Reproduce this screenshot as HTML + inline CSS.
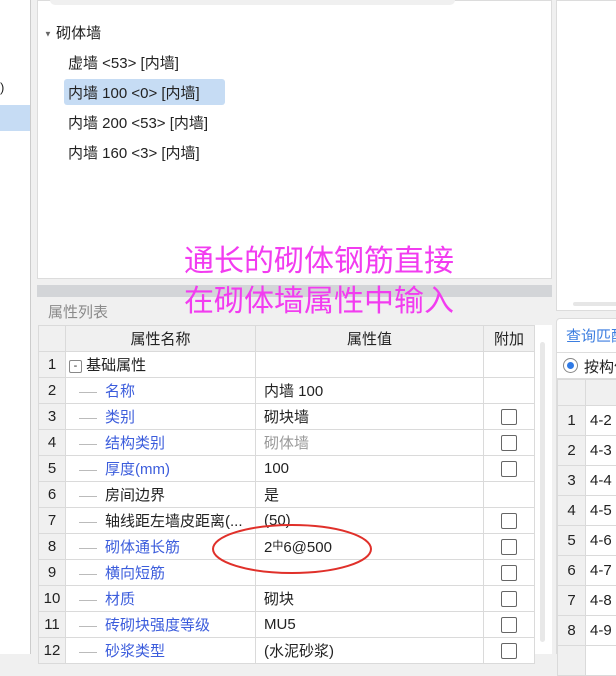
<!DOCTYPE html>
<html><head><meta charset="utf-8"><style>
*{margin:0;padding:0;box-sizing:border-box}
body{width:616px;height:654px;overflow:hidden;background:#f0f0f0;position:relative;font-family:"Liberation Sans","Noto Sans CJK SC",sans-serif;font-size:15px;color:#222}
.a{position:absolute}
table{border-collapse:collapse;table-layout:fixed;position:absolute}
td{border:1px solid #dadada;height:26px;padding:0 0 0 8px;white-space:nowrap;overflow:hidden;font-size:15px;background:#fff}
td.n{background:#f0f0f0;text-align:center;padding:0;font-size:15px}
tr.h td{background:#f0f0f0;text-align:center;padding:0}
.b{color:#3c5ddc}
.g{color:#999}
.cb{display:inline-block;width:16px;height:16px;border:1px solid #666;border-radius:2px;vertical-align:middle;background:#fff}
.ln{display:inline-block;width:18px;border-top:1px solid #bbb;vertical-align:middle;margin:0 8px 0 5px}
td.x{text-align:center;padding:0}
</style></head><body>
<div class="a" style="left:0;top:0;width:31px;height:654px;background:#fff;border-right:1px solid #ccc"></div>
<div class="a" style="left:0;top:105px;width:30px;height:26px;background:#c6dcf4"></div>
<div class="a" style="left:0;top:80px;font-size:13px">)</div>

<div class="a" style="left:37px;top:0;width:515px;height:279px;background:#fff;border:1px solid #dcdcdc"></div>
<div class="a" style="left:50px;top:0;width:405px;height:5px;background:#f0f0f0;border-radius:0 0 6px 6px"></div>
<div class="a" style="left:44px;top:22px;font-size:15px"><span style="font-size:8px;color:#666;vertical-align:middle">▼</span> 砌体墙</div>
<div class="a" style="left:68px;top:52px">虚墙 &lt;53&gt; [内墙]</div>
<div class="a" style="left:64px;top:79px;width:161px;height:26px;background:#c6dcf4;border-radius:3px"></div>
<div class="a" style="left:68px;top:82px">内墙 100 &lt;0&gt; [内墙]</div>
<div class="a" style="left:68px;top:112px">内墙 200 &lt;53&gt; [内墙]</div>
<div class="a" style="left:68px;top:142px">内墙 160 &lt;3&gt; [内墙]</div>

<div class="a" style="left:37px;top:285px;width:515px;height:12px;background:#d3d5d8"></div>
<div class="a" style="left:48px;top:301px;color:#8a8a8a;font-size:15px">属性列表</div>

<table style="left:38px;top:325px;width:496px">
<colgroup><col style="width:27px"><col style="width:190px"><col style="width:228px"><col style="width:51px"></colgroup>
<tr class="h"><td></td><td>属性名称</td><td>属性值</td><td>附加</td></tr>
<tr><td class="n">1</td><td style="padding-left:3px"><span class="cb" style="width:13px;height:13px;border-color:#888;font-size:11px;line-height:10px;text-align:center">-</span> 基础属性</td><td></td><td></td></tr>
<tr><td class="n">2</td><td><span class="ln"></span><span class="b">名称</span></td><td>内墙 100</td><td></td></tr>
<tr><td class="n">3</td><td><span class="ln"></span><span class="b">类别</span></td><td>砌块墙</td><td class="x"><span class="cb"></span></td></tr>
<tr><td class="n">4</td><td><span class="ln"></span><span class="b">结构类别</span></td><td class="g">砌体墙</td><td class="x"><span class="cb"></span></td></tr>
<tr><td class="n">5</td><td><span class="ln"></span><span class="b">厚度(mm)</span></td><td>100</td><td class="x"><span class="cb"></span></td></tr>
<tr><td class="n">6</td><td><span class="ln"></span>房间边界</td><td>是</td><td></td></tr>
<tr><td class="n">7</td><td><span class="ln"></span>轴线距左墙皮距离(...</td><td>(50)</td><td class="x"><span class="cb"></span></td></tr>
<tr><td class="n">8</td><td><span class="ln"></span><span class="b">砌体通长筋</span></td><td>2<span style="font-size:11px;vertical-align:3px">中</span>6@500</td><td class="x"><span class="cb"></span></td></tr>
<tr><td class="n">9</td><td><span class="ln"></span><span class="b">横向短筋</span></td><td></td><td class="x"><span class="cb"></span></td></tr>
<tr><td class="n">10</td><td><span class="ln"></span><span class="b">材质</span></td><td>砌块</td><td class="x"><span class="cb"></span></td></tr>
<tr><td class="n">11</td><td><span class="ln"></span><span class="b">砖砌块强度等级</span></td><td>MU5</td><td class="x"><span class="cb"></span></td></tr>
<tr><td class="n">12</td><td><span class="ln"></span><span class="b">砂浆类型</span></td><td>(水泥砂浆)</td><td class="x"><span class="cb"></span></td></tr>
</table>
<div class="a" style="left:534px;top:325px;width:18px;height:329px;background:#fff;border-left:1px solid #dadada"></div>
<div class="a" style="left:540px;top:342px;width:5px;height:300px;background:#e8e8e8;border-radius:3px"></div>

<svg class="a" style="left:0;top:0" width="616" height="654"><ellipse cx="292" cy="549" rx="79" ry="24" fill="none" stroke="#e0302a" stroke-width="2"/></svg>

<div class="a" style="left:184px;top:238px;color:#f23cf0;font-size:30px;line-height:40px;font-family:'Noto Sans CJK SC',sans-serif;white-space:nowrap">通长的砌体钢筋直接<br>在砌体墙属性中输入</div>

<div class="a" style="left:556px;top:0;width:62px;height:311px;background:#fff;border:1px solid #dcdcdc"></div>
<div class="a" style="left:573px;top:302px;width:45px;height:4px;background:#e6e6e6;border-radius:2px"></div>
<div class="a" style="left:556px;top:318px;width:62px;height:336px;background:#fff;border:1px solid #dcdcdc;border-radius:4px 0 0 0"></div>
<div class="a" style="left:566px;top:325px;color:#3c7ee0;font-size:15px;white-space:nowrap">查询匹配</div>
<div class="a" style="left:557px;top:352px;width:60px;height:27px;border-top:1px solid #ddd;border-bottom:1px solid #ddd;background:#fff"></div>
<div class="a" style="left:563px;top:358px;width:15px;height:15px;border:1px solid #888;border-radius:50%;background:#fff"><div style="margin:3px;width:7px;height:7px;border-radius:50%;background:#2f7ae5"></div></div>
<div class="a" style="left:584px;top:356px;white-space:nowrap">按构件</div>
<table style="left:557px;top:379px;width:70px">
<colgroup><col style="width:28px"><col style="width:42px"></colgroup>
<tr class="h"><td style="height:26px"></td><td></td></tr>
<tr><td class="n" style="height:30px">1</td><td style="padding-left:4px">4-2</td></tr>
<tr><td class="n" style="height:30px">2</td><td style="padding-left:4px">4-3</td></tr>
<tr><td class="n" style="height:30px">3</td><td style="padding-left:4px">4-4</td></tr>
<tr><td class="n" style="height:30px">4</td><td style="padding-left:4px">4-5</td></tr>
<tr><td class="n" style="height:30px">5</td><td style="padding-left:4px">4-6</td></tr>
<tr><td class="n" style="height:30px">6</td><td style="padding-left:4px">4-7</td></tr>
<tr><td class="n" style="height:30px">7</td><td style="padding-left:4px">4-8</td></tr>
<tr><td class="n" style="height:30px">8</td><td style="padding-left:4px">4-9</td></tr>
<tr><td class="n" style="height:30px"></td><td></td></tr>
</table>
</body></html>
